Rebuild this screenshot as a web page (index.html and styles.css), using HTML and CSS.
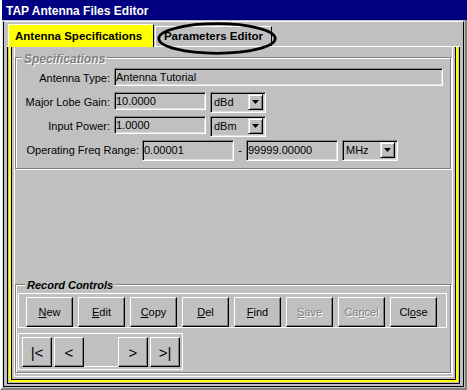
FILE: index.html
```html
<!DOCTYPE html>
<html>
<head>
	<title>TAP Antenna Files Editor</title>
	<link rel="stylesheet" href="styles.css">
</head>
<body>
<div class="window">
  <div class="titlebar">TAP Antenna Files Editor</div>
  <div class="body">
    <div class="frame">

      <div class="tabs">
        <div class="tab active">Antenna Specifications</div>
        <div class="tab">Parameters Editor</div>
        <svg class="oval" width="120" height="33" viewBox="0 0 120 33">
          <ellipse cx="60" cy="16.5" rx="58.2" ry="14.8" fill="none" stroke="#000" stroke-width="2.8"/>
        </svg>
      </div>

      <div class="panel">
        <!-- Specifications group -->
        <div class="group spec">
          <div class="group-title dim">Specifications</div>
          <div class="row">
            <span class="lbl">Antenna Type:</span>
            <div class="field type">Antenna Tutorial</div>
          </div>
          <div class="row">
            <span class="lbl">Major Lobe Gain:</span>
            <div class="field num">10.0000</div>
            <div class="combo"><span class="val">dBd</span><span class="drop"><svg width="7" height="4" viewBox="0 0 7 4"><polygon points="0,0 7,0 3.5,4" fill="#000"/></svg></span></div>
          </div>
          <div class="row">
            <span class="lbl">Input Power:</span>
            <div class="field num">1.0000</div>
            <div class="combo"><span class="val">dBm</span><span class="drop"><svg width="7" height="4" viewBox="0 0 7 4"><polygon points="0,0 7,0 3.5,4" fill="#000"/></svg></span></div>
          </div>
          <div class="row">
            <span class="lbl long">Operating Freq Range:</span>
            <div class="field num tall">0.00001</div>
            <span class="dash">-</span>
            <div class="field num tall">99999.00000</div>
            <div class="combo"><span class="val">MHz</span><span class="drop"><svg width="7" height="4" viewBox="0 0 7 4"><polygon points="0,0 7,0 3.5,4" fill="#000"/></svg></span></div>
          </div>
        </div>

        <!-- Record Controls group -->
        <div class="group record">
          <div class="group-title">Record Controls</div>
          <div class="btn-bar">
            <button class="btn"><u>N</u>ew</button>
            <button class="btn"><u>E</u>dit</button>
            <button class="btn"><u>C</u>opy</button>
            <button class="btn"><u>D</u>el</button>
            <button class="btn"><u>F</u>ind</button>
            <button class="btn dim"><u>S</u>ave</button>
            <button class="btn dim">Ca<u>n</u>cel</button>
            <button class="btn">Cl<u>o</u>se</button>
          </div>
          <div class="nav-bar">
            <button class="nav">|&lt;</button>
            <button class="nav">&lt;</button>
            <div class="pos"></div>
            <button class="nav">&gt;</button>
            <button class="nav last">&gt;|</button>
          </div>
        </div>
      </div>

    </div>
  </div>
</div>
</body>
</html>
```

FILE: styles.css
```css
/* page + window frame */
body {
  margin: 0;
  background: #c0c0c0;
  font-family: "Liberation Sans", Arial, sans-serif;
  font-size: 11px;
  color: #000;
}

.window {
  width: 467px;
  height: 390px;
  box-sizing: border-box;
  display: flex;
  flex-direction: column;
  border-left: 2px solid #fff;
  border-right: 2px solid #808080;
  border-bottom: 2px solid #808080;
  box-shadow: inset 1px 0 #dfdfdf;
}

.titlebar {
  height: 18px;
  line-height: 18px;
  padding: 2px 0 0 4px;
  margin-right: -2px;
  background: #000080;
  color: #fff;
  font-weight: bold;
  font-size: 12px;
}

.body {
  flex: 1;
  display: flex;
}

.frame {
  flex: 1;
  margin: 1px;
  display: flex;
  flex-direction: column;
  border: 1px solid #000;
  border-top-color: #fff;
  padding: 2px 3px 2px 3px;
}

/* tabs */
.tabs {
  position: relative;
  display: flex;
  align-items: flex-end;
  padding-left: 1px;
  height: 22px;
}

.tab {
  box-sizing: border-box;
  height: 20px;
  line-height: 19px;
  border-top: 1px solid #fff;
  border-left: 1px solid #fff;
  border-right: 1px solid #000;
  font-weight: bold;
  font-size: 11.5px;
  width: 117px;
  margin-left: 1px;
  text-align: center;
}

.tab.active {
  position: relative;
  z-index: 2;
  height: 23px;
  line-height: 22px;
  margin: 0 0 -1px 0;
  width: 146px;
  text-align: left;
  padding-left: 6px;
  background: #ffff00;
}

.oval {
  position: absolute;
  left: 150px;
  top: -2px;
  z-index: 3;
}

/* tab page */
.panel {
  flex: 1;
  display: flex;
  flex-direction: column;
  border-top: 1px solid #fff;
  padding: 10px 9px 11px 8px;
  box-shadow:
    inset 1px 0 #000, inset -1px 0 #000, inset 0 -1px #000,
    inset 2px 0 #c0c0c0, inset -2px 0 #c0c0c0, inset 0 -2px #c0c0c0,
    inset 4px 0 #ffff00, inset -4px 0 #ffff00, inset 0 -4px #ffff00,
    inset 5px 0 #000, inset -5px 0 #000, inset 0 -5px #000,
    inset 7px 0 #c0c0c0, inset -7px 0 #c0c0c0, inset 0 -7px #c0c0c0,
    inset 8px 0 #fff, inset -8px 0 #fff, inset 0 -8px #fff;
}

.group {
  position: relative;
  border: 1px solid #808080;
  box-shadow: inset 1px 1px #fff, 1px 1px #fff;
}

.group-title {
  position: absolute;
  top: -6px;
  left: 9px;
  padding: 0 2px;
  line-height: 12px;
  background: #c0c0c0;
  font-weight: bold;
  font-style: italic;
}

.dim {
  color: #808080;
  text-shadow: 1px 1px 0 #fff;
}

.spec {
  padding: 10px 0 7px 0;
  display: flex;
  flex-direction: column;
  gap: 3px;
}

.spec .group-title {
  top: -5px;
  left: 6px;
  font-size: 12px;
  line-height: 13px;
}

.row {
  display: flex;
  align-items: flex-start;
  height: 21px;
}

.lbl {
  width: 94px;
  margin-right: 4px;
  text-align: right;
  line-height: 21px;
  white-space: nowrap;
}

.lbl.long {
  width: 123px;
  margin-right: 3px;
}

.field {
  box-sizing: border-box;
  height: 18px;
  line-height: 15px;
  padding-left: 1px;
  border: 1px solid;
  border-color: #808080 #fff #fff #808080;
  box-shadow: inset 1px 1px #000, inset -1px -1px #dfdfdf;
  padding-top: 1px;
  white-space: nowrap;
}

.field.type { width: 329px; }
.field.num { width: 92px; }
.field.tall {
  height: 21px;
  line-height: 17px;
}

.dash {
  width: 12px;
  text-align: center;
  line-height: 21px;
}

.combo {
  box-sizing: border-box;
  display: flex;
  width: 56px;
  height: 21px;
  margin-left: 4px;
  border: 1px solid;
  border-color: #808080 #fff #fff #808080;
  box-shadow: inset 1px 1px #000, inset -1px -1px #dfdfdf;
  padding: 1px 2px 2px 3px;
}

.combo .val {
  flex: 1;
  line-height: 17px;
}

.drop {
  box-sizing: border-box;
  width: 15px;
  height: 16px;
  display: flex;
  align-items: center;
  justify-content: center;
  border: 1px solid;
  border-color: #dfdfdf #000 #000 #dfdfdf;
  box-shadow: inset 1px 1px #fff, inset -1px -1px #808080;
}

/* record controls */
.record {
  margin-top: auto;
  padding: 8px 0 2px 2px;
}

.record .group-title {
  font-size: 11px;
}

.btn-bar {
  display: flex;
  gap: 5px;
  width: 429px;
  box-sizing: border-box;
  border: 1px solid #fff;
  padding: 3px 0 0 7px;
}

.btn, .nav {
  box-sizing: border-box;
  width: 47px;
  height: 30px;
  padding: 0;
  font-family: "Liberation Sans", Arial, sans-serif;
  font-size: 11px;
  color: #000;
  background: #c0c0c0;
  border: 1px solid;
  border-color: #fff #000 #000 #fff;
  box-shadow: inset -1px -1px #808080;
}

.btn.dim { color: #808080; }

.nav-bar {
  display: flex;
  width: 165px;
  box-sizing: border-box;
  margin-top: 5px;
  border: 1px solid #fff;
  padding: 3px 0 2px 3px;
}

.nav {
  width: 30px;
  margin-right: 2px;
  font-size: 15px;
}

.pos {
  width: 34px;
  height: 30px;
  box-sizing: border-box;
  margin-left: -2px;
  border-bottom: 1px solid #fff;
}
```
